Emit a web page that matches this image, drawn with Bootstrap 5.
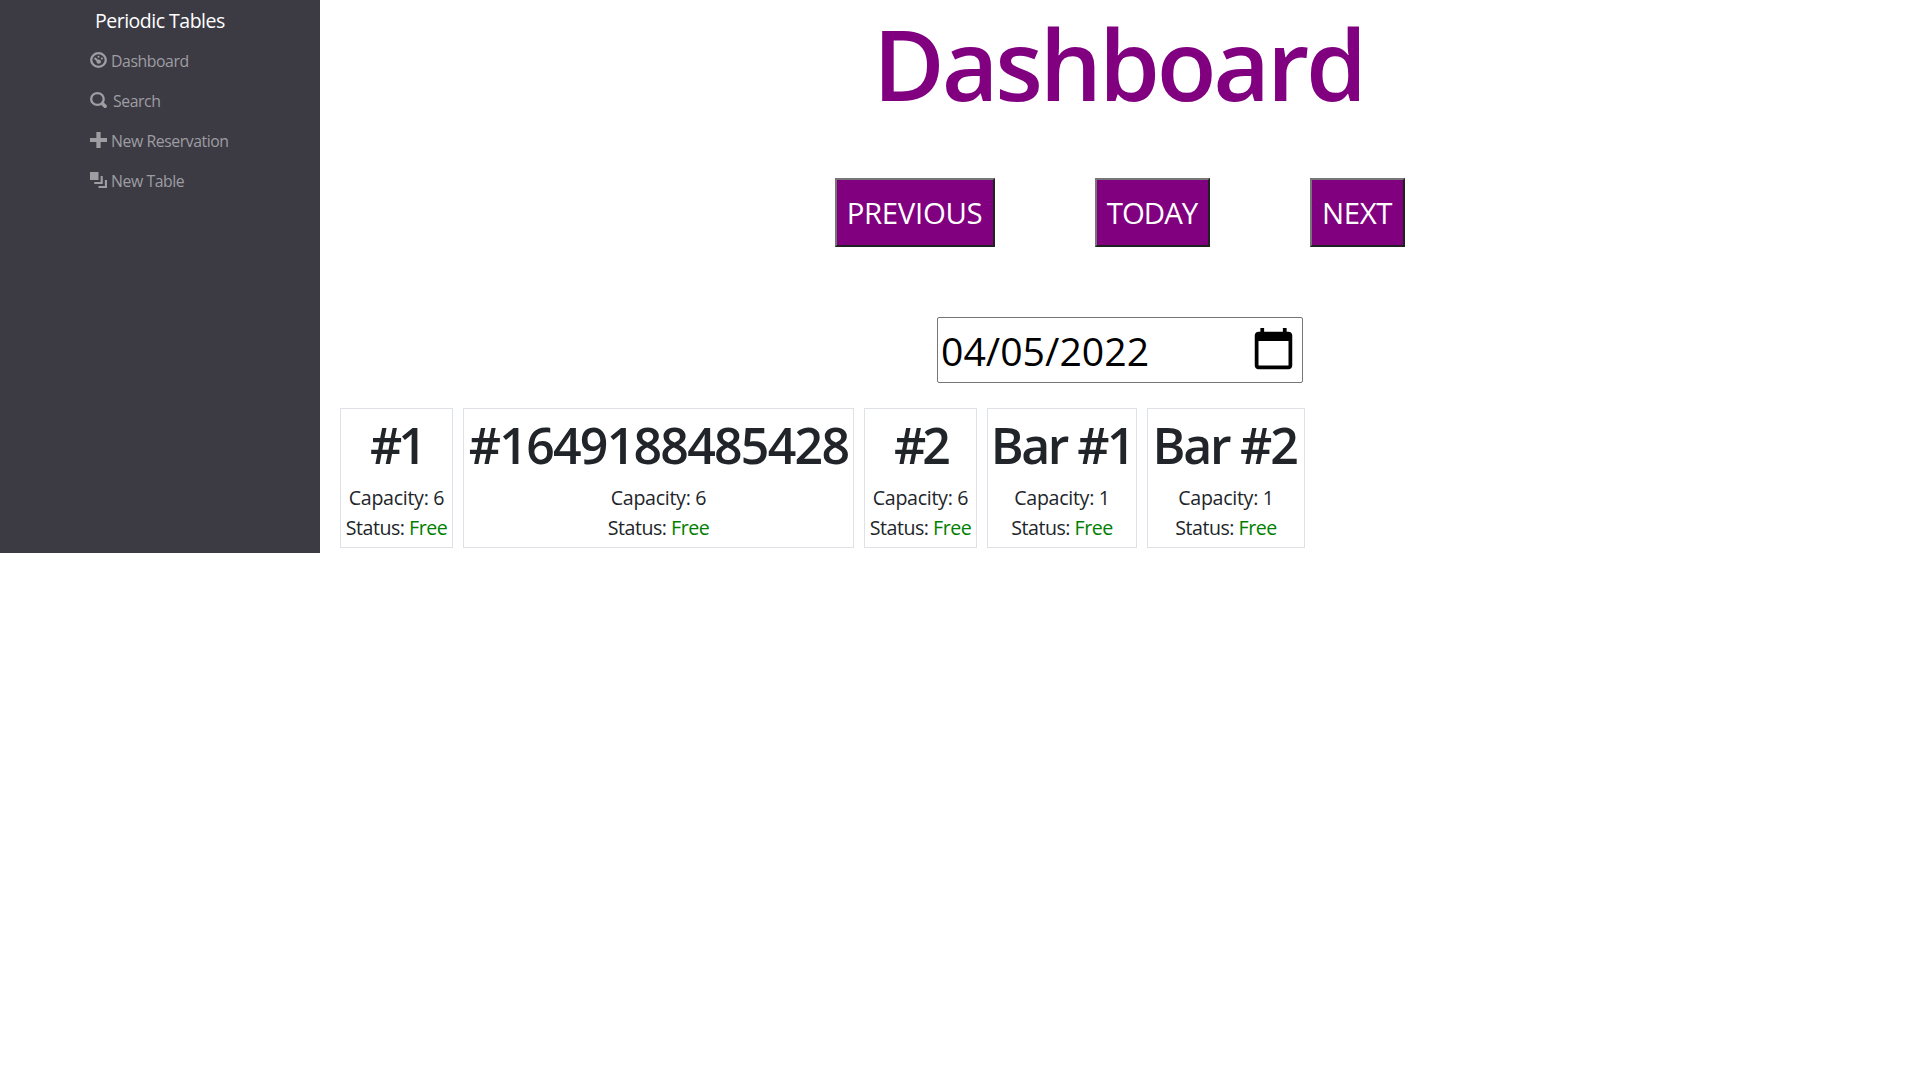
<!DOCTYPE html>
<html lang="en">
<head>
<meta charset="utf-8">
<meta name="viewport" content="width=device-width, initial-scale=1">
<title>Periodic Tables</title>
<link href="https://cdn.jsdelivr.net/npm/bootstrap@5.3.0/dist/css/bootstrap.min.css" rel="stylesheet">
<style>
body{font-family:"Open Sans","Noto Sans",sans-serif;color:#212529}
.side{width:320px;height:553px;background:#3c3b44;flex:none}
.side-brand{font-size:19.5px;line-height:42px;height:41px;margin-left:95px;color:#fff;white-space:nowrap;letter-spacing:-.5px}
.side-link{height:40px;margin-left:90px;color:#9e9da2;font-size:15.8px;line-height:40px;white-space:nowrap;text-decoration:none;letter-spacing:-.43px}
.side-link svg{width:17px;height:16px;margin-right:4px;margin-bottom:2px;flex:none}
.side-link.find svg{margin-right:6px}
.page-title{font-size:98px;font-weight:600;line-height:127px;color:purple;height:178px;letter-spacing:-3.2px;padding-right:3px}
.nav-gap{gap:100px}
.date-row{margin:70px 0 25px}
.btn-nav{height:69px;background:purple;color:#fff;font-size:29.4px;border:2px solid;border-color:#767676 #212121 #212121 #767676;padding:2px 1px 0 0;white-space:nowrap;letter-spacing:-.35px}
.w-prev{width:160px}
.w-today{width:115px;letter-spacing:-1px}
.w-next{width:95px}
.date-box{width:366px;height:66px;border:1px solid #767676;border-radius:2px;font-size:39.2px;color:#000;padding:3px 6px 1px 3px;background:#fff}
.date-box::-webkit-calendar-picker-indicator{width:45px;height:45px;padding:0;background-size:45px 45px;position:relative;top:-2px}
.tbl-row{gap:10px;padding-left:20px}
.tbl{height:140px;font-size:19.6px;line-height:30px;white-space:nowrap;border:1px solid #dee2e6;letter-spacing:-.3px}
.tbl .status{letter-spacing:-.5px}
.tbl h2{font-size:50px;font-weight:600;line-height:60px;margin:6px 0 8px;height:60px;letter-spacing:-1.75px}
.tbl h2.short-name{letter-spacing:-4px}
.tbl h2.bar-name{letter-spacing:-2.5px}
.w-s{width:113px}.w-l{width:391px}.w-b1{width:150px}.w-b2{width:158px}
.w-b2 h2.bar-name{letter-spacing:-2.2px;padding-right:3px}
.free{color:green}
</style>
</head>
<body>
<div class="d-flex">
<nav class="side d-flex flex-column">
<div class="side-brand">Periodic Tables</div>
<a class="side-link d-flex align-items-center" href="#"><svg viewBox="0 0 16 16" preserveAspectRatio="none" fill="currentColor"><circle cx="8" cy="8" r="6.850" fill="none" stroke="currentColor" stroke-width="2.200"/><circle cx="8" cy="4.700" r="1"/><circle cx="11.200" cy="6.500" r="1.100"/><circle cx="8.200" cy="9.700" r="2.100"/><path d="M4.800 6.500L8 9.500" stroke="currentColor" stroke-width="1.900" stroke-linecap="round"/></svg>Dashboard</a>
<a class="side-link find d-flex align-items-center" href="#"><svg viewBox="0 0 16 16" preserveAspectRatio="none" fill="none" stroke="currentColor"><circle cx="7" cy="7" r="5.900" stroke-width="2.200"/><path d="M11.800 11.800L14.200 14.200" stroke-width="3.400" stroke-linecap="round"/></svg>Search</a>
<a class="side-link d-flex align-items-center" href="#"><svg viewBox="0 0 8 8" preserveAspectRatio="none" fill="currentColor"><path d="M3 0v3h-3v2h3v3h2v-3h3v-2h-3v-3h-2z"/></svg>New Reservation</a>
<a class="side-link d-flex align-items-center" href="#"><svg viewBox="0 0 8 8" preserveAspectRatio="none" fill="currentColor"><path d="M0 0v4h4v-4h-4zm5 2v3h-3v1h4v-4h-1zm2 2v3h-3v1h4v-4h-1z"/></svg>New Table</a>
</nav>
<main class="flex-grow-1">
<h1 class="page-title text-center mb-0">Dashboard</h1>
<div class="nav-gap d-flex justify-content-center">
<button class="btn-nav w-prev">PREVIOUS</button>
<button class="btn-nav w-today">TODAY</button>
<button class="btn-nav w-next">NEXT</button>
</div>
<div class="date-row d-flex justify-content-center"><input class="date-box" type="date" value="2022-04-05" aria-label="Date"></div>
<div class="tbl-row d-flex">
<div class="tbl w-s text-center"><h2 class="short-name">#1</h2><div>Capacity: 6</div><div class="status">Status: <span class="free">Free</span></div></div>
<div class="tbl w-l text-center"><h2>#1649188485428</h2><div>Capacity: 6</div><div class="status">Status: <span class="free">Free</span></div></div>
<div class="tbl w-s text-center"><h2 class="short-name">#2</h2><div>Capacity: 6</div><div class="status">Status: <span class="free">Free</span></div></div>
<div class="tbl w-b1 text-center"><h2 class="bar-name">Bar #1</h2><div>Capacity: 1</div><div class="status">Status: <span class="free">Free</span></div></div>
<div class="tbl w-b2 text-center"><h2 class="bar-name">Bar #2</h2><div>Capacity: 1</div><div class="status">Status: <span class="free">Free</span></div></div>
</div>
</main>
</div>
<script src="https://cdn.jsdelivr.net/npm/bootstrap@5.3.0/dist/js/bootstrap.bundle.min.js"></script>
</body>
</html>
